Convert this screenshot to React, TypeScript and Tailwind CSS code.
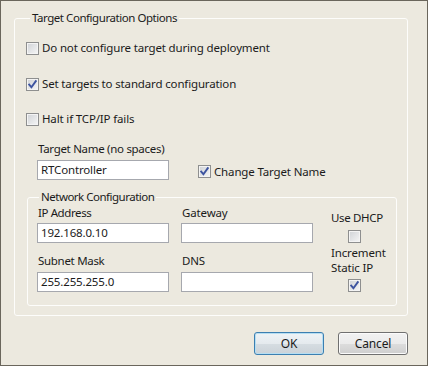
import React from "react";

function Check({ checked }: { checked?: boolean }) {
  return (
    <span className="relative flex h-[13px] w-[13px] shrink-0 items-center justify-center border border-[#8e8f8f] bg-[linear-gradient(135deg,#cfd2d6,#f6f6f6)] shadow-[inset_0_0_0_1px_#f4f4f4]">
      {checked && (
        <svg width="11" height="11" viewBox="0 0 11 11" className="absolute left-0 top-0">
          <path d="M2.2 5.6 L4.4 8.2 L8.8 2.2" fill="none" stroke="#3d54a0" strokeWidth="1.9" strokeLinecap="square" />
        </svg>
      )}
    </span>
  );
}

function Input({ value }: { value?: string }) {
  return (
    <div className="flex h-[20px] w-[132px] items-center border border-[#a6a8ae] bg-white pl-[3px] leading-[16px]">
      {value}
    </div>
  );
}

function CheckRow({ label, checked, className }: { label: string; checked?: boolean; className?: string }) {
  return (
    <div className={"flex h-[16px] items-center gap-[3px] leading-[16px] " + (className ?? "")}>
      <Check checked={checked} />
      <span>{label}</span>
    </div>
  );
}

export default function App() {
  return (
    <div className="flex h-[366px] w-[428px] flex-col border border-[#6a665c] bg-[#ECE9DF] font-['Noto_Sans',sans-serif] text-[11.5px] tracking-[-0.15px] text-[#1b1b1b]">
      <fieldset className="ml-[13px] mt-[9px] w-[394px] rounded-[3px] border border-[#fdfdfb] pb-[9px] pl-[11px] pt-[14px]">
        <legend className="ml-[4px] px-[2px] leading-[16px] tracking-[-0.45px]">Target Configuration Options</legend>
        <CheckRow label="Do not configure target during deployment" />
        <CheckRow label="Set targets to standard configuration" checked className="mt-[20px]" />
        <CheckRow label="Halt if TCP/IP fails" className="mt-[19px]" />
        <div className="ml-[12px] mt-[14px] leading-[16px] tracking-[-0.3px]">Target Name (no spaces)</div>
        <div className="ml-[11px] mt-[3px] flex items-center">
          <Input value="RTController" />
          <CheckRow label="Change Target Name" checked className="ml-[29px] mt-[3px]" />
        </div>
        <fieldset className="ml-[1px] mt-[9px] w-[370px] rounded-[3px] border border-[#fdfdfb] pb-[13px] pl-[9px]">
          <legend className="ml-[2px] px-[2px] leading-[16px] tracking-[-0.5px]">Network Configuration</legend>
          <div className="flex">
            <div className="flex w-[132px] flex-col">
              <div className="pl-[1px] leading-[16px] tracking-[-0.4px]">IP Address</div>
              <div className="mt-[2px]">
                <Input value="192.168.0.10" />
              </div>
              <div className="mt-[10px] pl-[1px] leading-[16px] tracking-[-0.3px]">Subnet Mask</div>
              <div className="mt-[3px]">
                <Input value="255.255.255.0" />
              </div>
            </div>
            <div className="ml-[12px] flex w-[132px] flex-col">
              <div className="pl-[1px] leading-[16px]">Gateway</div>
              <div className="mt-[2px]">
                <Input />
              </div>
              <div className="mt-[10px] pl-[1px] leading-[16px]">DNS</div>
              <div className="mt-[3px]">
                <Input />
              </div>
            </div>
            <div className="ml-[18px] flex flex-col">
              <div className="mt-[5px] leading-[16px] tracking-[-0.35px]">Use DHCP</div>
              <div className="ml-[17px] mt-[4px]">
                <Check />
              </div>
              <div className="mt-[2px] leading-[15px]">
                Increment
                <br />
                Static IP
              </div>
              <div className="ml-[17px] mt-[4px]">
                <Check checked />
              </div>
            </div>
          </div>
        </fieldset>
      </fieldset>
      <div className="mt-[16px] flex justify-end gap-[14px] pr-[19px]">
        <button className="flex h-[23px] w-[70px] items-center justify-center rounded-[3px] border border-[#3c7fb1] bg-[linear-gradient(#eef3f6,#e5eaee_50%,#d6dde2_50%,#cbd2d8)] shadow-[inset_0_0_0_1px_#b6def2] text-[12px] text-[#1b1b1b]">
          OK
        </button>
        <button className="flex h-[23px] w-[70px] items-center justify-center rounded-[3px] border border-[#707070] bg-[linear-gradient(#f2f2f2,#ebebeb_50%,#dddddd_50%,#cfcfcf)] shadow-[inset_0_0_0_1px_#fbfbfb] text-[12px] text-[#1b1b1b]">
          Cancel
        </button>
      </div>
    </div>
  );
}
